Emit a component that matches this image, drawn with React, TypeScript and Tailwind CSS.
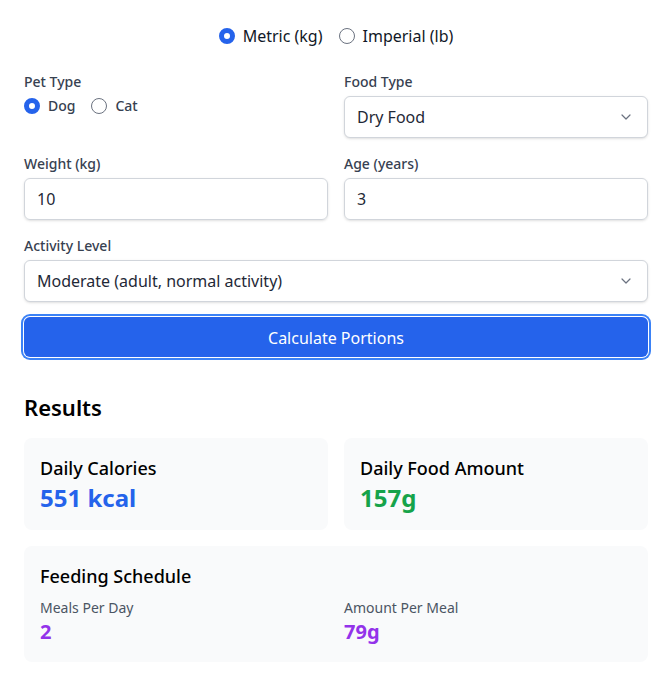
import React from "react";

function Chevron() {
  return (
    <svg className="pointer-events-none absolute right-[14px] top-1/2 -translate-y-1/2" width="16" height="16" viewBox="0 0 24 24" fill="none" stroke="#6b7280" strokeWidth="1.8" strokeLinecap="round" strokeLinejoin="round">
      <path d="M6 9l6 6 6-6" />
    </svg>
  );
}

const radioCls =
  "h-4 w-4 shrink-0 appearance-none rounded-full border border-[#6b7280] bg-white checked:border-[5px] checked:border-[#2563eb]";

export default function App() {
  const font = { fontFamily: '"Noto Sans", "Open Sans", Arial, sans-serif' };
  return (
    <div className="min-h-[686px] w-[672px] bg-white text-[#111827]" style={font}>
      <div className="rounded-lg bg-white p-6">
        <div className="flex h-6 items-center justify-center gap-4 text-base text-[#111827]">
          <label className="flex items-center gap-2">
            <input type="radio" name="unit" defaultChecked className={radioCls} />
            <span>Metric (kg)</span>
          </label>
          <label className="flex items-center gap-2">
            <input type="radio" name="unit" className={radioCls} />
            <span>Imperial (lb)</span>
          </label>
        </div>

        <div className="mt-6 grid grid-cols-2 gap-x-4 gap-y-4">
          <div>
            <label className="mb-1 block text-sm font-medium text-[#374151]">Pet Type</label>
            <div className="flex h-5 items-center gap-4">
              <label className="flex items-center gap-2 text-sm font-medium text-[#374151]">
                <input type="radio" name="pet" defaultChecked className={radioCls} />
                <span>Dog</span>
              </label>
              <label className="flex items-center gap-2 text-sm font-medium text-[#374151]">
                <input type="radio" name="pet" className={radioCls} />
                <span>Cat</span>
              </label>
            </div>
          </div>
          <div>
            <label className="mb-1 block text-sm font-medium text-[#374151]">Food Type</label>
            <div className="relative">
              <select className="h-[42px] w-full appearance-none rounded-md border border-[#d1d5db] bg-white px-3 text-base text-[#1f2937] shadow-sm" defaultValue="dry">
                <option value="dry">Dry Food</option>
                <option value="wet">Wet Food</option>
              </select>
              <Chevron />
            </div>
          </div>
          <div>
            <label className="mb-1 block text-sm font-medium text-[#374151]">Weight (kg)</label>
            <input type="number" defaultValue="10" className="h-[42px] w-full rounded-md border border-[#d1d5db] px-3 text-base text-[#1f2937] shadow-sm" />
          </div>
          <div>
            <label className="mb-1 block text-sm font-medium text-[#374151]">Age (years)</label>
            <input type="number" defaultValue="3" className="h-[42px] w-full rounded-md border border-[#d1d5db] px-3 text-base text-[#1f2937] shadow-sm" />
          </div>
          <div className="col-span-2">
            <label className="mb-1 block text-sm font-medium text-[#374151]">Activity Level</label>
            <div className="relative">
              <select className="h-[42px] w-full appearance-none rounded-md border border-[#d1d5db] bg-white px-3 text-base text-[#1f2937] shadow-sm" defaultValue="moderate">
                <option value="moderate">Moderate (adult, normal activity)</option>
              </select>
              <Chevron />
            </div>
          </div>
        </div>

        <button className="mt-[15px] h-10 w-full rounded-md bg-[#2563eb] pt-[2px] text-base text-white ring-2 ring-[#3b82f6] ring-offset-1">
          Calculate Portions
        </button>

        <div className="mt-[34px]">
          <h2 className="mb-[15px] text-[22px] leading-8 font-semibold text-black">Results</h2>
          <div className="grid grid-cols-2 gap-4">
            <div className="rounded-lg bg-[#f9fafb] p-4">
              <div className="text-lg leading-7 font-medium text-black">Daily Calories</div>
              <div className="text-2xl leading-8 font-bold text-[#2563eb]">551 kcal</div>
            </div>
            <div className="rounded-lg bg-[#f9fafb] p-4">
              <div className="text-lg leading-7 font-medium text-black">Daily Food Amount</div>
              <div className="text-2xl leading-8 font-bold text-[#16a34a]">157g</div>
            </div>
            <div className="col-span-2 rounded-lg bg-[#f9fafb] p-4">
              <div className="mb-2 text-lg leading-7 font-medium text-black">Feeding Schedule</div>
              <div className="grid grid-cols-2 gap-4">
                <div>
                  <div className="text-sm text-[#4b5563]">Meals Per Day</div>
                  <div className="text-xl leading-7 font-bold text-[#9333ea]">2</div>
                </div>
                <div>
                  <div className="text-sm text-[#4b5563]">Amount Per Meal</div>
                  <div className="text-xl leading-7 font-bold text-[#9333ea]">79g</div>
                </div>
              </div>
            </div>
          </div>
        </div>
      </div>
    </div>
  );
}
